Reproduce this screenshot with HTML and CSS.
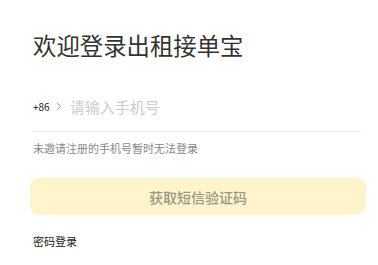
FILE: index.html
```html
<!DOCTYPE html>
<html lang="zh-CN">
<head>
    <meta charset="UTF-8">
    <meta name="viewport" content="width=device-width, initial-scale=1.0">
    <title>登录 - 出租接单宝</title>
    <link rel="stylesheet" href="styles.css">
</head>
<body>
    <div class="login">
        <h1 class="login-title">欢迎登录出租接单宝</h1>

        <!-- 手机号输入 -->
        <div class="phone-row">
            <span class="area-code">+86</span>
            <svg class="area-arrow" width="6" height="9" viewBox="0 0 6 9">
                <path d="M1 1 L4.5 4.5 L1 8" fill="none" stroke="#999" stroke-width="1"/>
            </svg>
            <input class="phone-input" type="tel" placeholder="请输入手机号">
        </div>
        <p class="login-tip">未邀请注册的手机号暂时无法登录</p>

        <button class="btn-code" disabled>获取短信验证码</button>

        <a class="pwd-link" href="#">密码登录</a>
    </div>
</body>
</html>
```

FILE: styles.css
```css
* {
    margin: 0;
    padding: 0;
    box-sizing: border-box;
    font-family: "Noto Sans CJK SC", "Noto Sans", sans-serif;
}

body {
    background: #fff;
    color: #333;
}

.login {
    padding: 29px 15px 0 33px;
}

.login-title {
    font-size: 23.4px;
    font-weight: 400;
    line-height: 32px;
    color: #333;
}

.phone-row {
    display: flex;
    align-items: center;
    margin-top: 27px;
    height: 44px;
    padding-bottom: 6px;
    border-bottom: 1px solid #eee;
}

.area-code {
    font-size: 10px;
    color: #222;
}

.area-arrow {
    margin-left: 6px;
}

.phone-input {
    margin-left: 8px;
    border: none;
    outline: none;
    font-size: 15px;
    color: #333;
    flex: 1;
    background: transparent;
}

.phone-input::placeholder {
    color: #ccc;
}

.login-tip {
    margin-top: 8px;
    font-size: 11px;
    line-height: 16px;
    color: #888;
}

.btn-code {
    display: block;
    width: 336px;
    height: 37px;
    margin: 22px 0 0 -3px;
    border: none;
    border-radius: 9px;
    background: #fff4cc;
    color: #9c9484;
    font-size: 14px;
    font-weight: 500;
}

.pwd-link {
    display: inline-block;
    margin-top: 18px;
    font-size: 11px;
    color: #222;
    text-decoration: none;
}
```
